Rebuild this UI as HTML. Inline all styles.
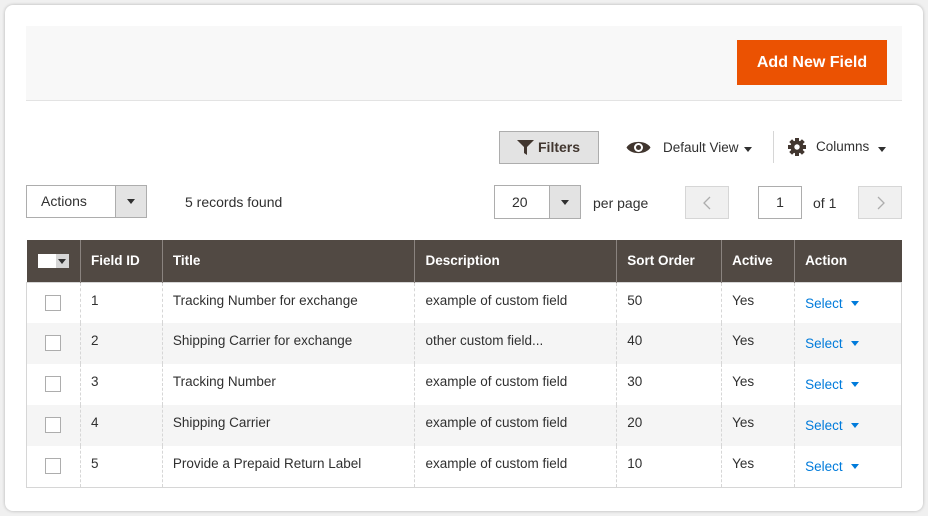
<!DOCTYPE html>
<html><head><style>
*{box-sizing:border-box;margin:0;padding:0}
body{width:928px;height:516px;background:#f0f0f0;font-family:"Liberation Sans",sans-serif;color:#303030;position:relative;overflow:hidden}
.card{position:absolute;left:5px;top:5px;width:918px;height:506px;background:#fff;border-radius:8px;box-shadow:0 0 3px rgba(0,0,0,.25)}
.abs{position:absolute}
.hdr{left:26px;top:26px;width:876px;height:75px;background:#f8f8f8;border-bottom:1px solid #e3e3e3}
.btn{left:737px;top:40px;width:150px;height:45px;background:#eb5202;color:#fff;font-weight:bold;font-size:16px;line-height:45px;text-align:center}
.t{font-size:14px}
table{position:absolute;left:26px;top:240px;width:876px;border-collapse:collapse;font-size:13.5px}
th{background:#514943;color:#fff;text-align:left;font-weight:bold;height:42px;padding-left:10px;border-left:1px solid #8a837f;font-size:13.5px}
th:first-child{border-left:none}
td{height:41px;padding-left:10px;border-left:1px dashed #d6d6d6;vertical-align:top;padding-top:10px}
td:first-child{border-left:none}
tr.g td{background:#f5f5f5}
tbody{border:1px solid #d6d6d6}
tbody tr:last-child td{border-bottom:1px solid #d6d6d6}
.cb{display:inline-block;width:16px;height:16px;border:1px solid #adadad;background:#fff;margin-left:8px;margin-top:2px}
.sel{color:#007bdb;padding-top:13px}
.sel:after{content:"";display:inline-block;border:4px solid transparent;border-top:5px solid #007bdb;border-bottom:0;margin-left:8px;vertical-align:2px}
.caret{display:inline-block;border:4px solid transparent;border-top:5px solid #303030;border-bottom:0}
</style></head><body>
<div class="card"></div>
<div class="abs hdr"></div>
<div class="abs btn">Add New Field</div>

<div class="abs" style="left:499px;top:131px;width:100px;height:33px;background:#e3e3e3;border:1px solid #adadad;font-size:14px;font-weight:bold;color:#41362f;line-height:31px;padding-left:38px">
<svg class="abs" style="left:17px;top:8px" width="17" height="15" viewBox="0 0 17 15"><path d="M0 0H17L10 7V15L7 13V7Z" fill="#41362f"/></svg>Filters</div>
<svg class="abs" style="left:626px;top:140px" width="25" height="15" viewBox="0 0 25 15"><path d="M0.5 7.5C5 0 20 0 24.5 7.5C20 15 5 15 0.5 7.5Z" fill="#41362f"/><circle cx="12.5" cy="7.5" r="4.5" fill="#fff"/><circle cx="12.5" cy="7.5" r="2.5" fill="#41362f"/></svg>
<div class="abs t" style="left:663px;top:140px;font-size:13.5px">Default View</div>
<span class="abs caret" style="left:744px;top:147px"></span>
<div class="abs" style="left:773px;top:131px;width:1px;height:32px;background:#d6d6d6"></div>
<svg class="abs" style="left:788px;top:138px" width="18" height="18" viewBox="0 0 18 18"><g fill="#41362f"><circle cx="9" cy="9" r="6.5"/><rect x="7" y="0" width="4" height="18"/><rect x="0" y="7" width="18" height="4"/><rect x="7" y="0" width="4" height="18" transform="rotate(45 9 9)"/><rect x="7" y="0" width="4" height="18" transform="rotate(-45 9 9)"/></g><circle cx="9" cy="9" r="2.7" fill="#fff"/></svg>
<div class="abs t" style="left:816px;top:139px;font-size:13.5px">Columns</div>
<span class="abs caret" style="left:878px;top:147px"></span>

<div class="abs" style="left:26px;top:185px;width:121px;height:33px;border:1px solid #adadad;font-size:14px;line-height:31px;padding-left:14px">Actions
<div class="abs" style="left:88px;top:-1px;width:32px;height:33px;background:#e3e3e3;border:1px solid #adadad"><span class="abs caret" style="left:11px;top:13px"></span></div></div>
<div class="abs t" style="left:185px;top:194px">5 records found</div>

<div class="abs" style="left:494px;top:185px;width:87px;height:34px;border:1px solid #adadad;font-size:14px;line-height:32px;padding-left:17px">20
<div class="abs" style="left:54px;top:-1px;width:32px;height:34px;background:#e3e3e3;border:1px solid #adadad"><span class="abs caret" style="left:11px;top:14px"></span></div></div>
<div class="abs t" style="left:593px;top:195px">per page</div>
<div class="abs" style="left:685px;top:186px;width:44px;height:33px;background:#f0f0f0;border:1px solid #d6d6d6"><svg class="abs" style="left:17px;top:9px" width="8" height="14" viewBox="0 0 8 14"><path d="M7 1L1 7L7 13" stroke="#adadad" stroke-width="1.3" fill="none"/></svg></div>
<div class="abs" style="left:758px;top:186px;width:44px;height:33px;border:1px solid #adadad;text-align:center;line-height:31px;font-size:14px">1</div>
<div class="abs t" style="left:813px;top:195px">of 1</div>
<div class="abs" style="left:858px;top:186px;width:44px;height:33px;background:#f0f0f0;border:1px solid #d6d6d6"><svg class="abs" style="left:18px;top:9px" width="8" height="14" viewBox="0 0 8 14"><path d="M1 1L7 7L1 13" stroke="#adadad" stroke-width="1.3" fill="none"/></svg></div>

<table>
<colgroup><col style="width:54px"><col style="width:82px"><col style="width:253px"><col style="width:202px"><col style="width:105px"><col style="width:73px"><col style="width:107px"></colgroup>
<thead><tr><th style="padding-left:11px"><span style="display:inline-block;width:31px;height:14px;background:#fff;position:relative;vertical-align:middle"><span style="position:absolute;right:0;top:0;width:13px;height:14px;background:#d6d6d6"><span class="caret" style="position:absolute;left:2px;top:5px"></span></span></span></th><th>Field ID</th><th>Title</th><th>Description</th><th>Sort Order</th><th>Active</th><th>Action</th></tr></thead>
<tbody>
<tr><td><span class="cb"></span></td><td>1</td><td>Tracking Number for exchange</td><td>example of custom field</td><td>50</td><td>Yes</td><td class="sel">Select</td></tr>
<tr class="g"><td><span class="cb"></span></td><td>2</td><td>Shipping Carrier for exchange</td><td>other custom field...</td><td>40</td><td>Yes</td><td class="sel">Select</td></tr>
<tr><td><span class="cb"></span></td><td>3</td><td>Tracking Number</td><td>example of custom field</td><td>30</td><td>Yes</td><td class="sel">Select</td></tr>
<tr class="g"><td><span class="cb"></span></td><td>4</td><td>Shipping Carrier</td><td>example of custom field</td><td>20</td><td>Yes</td><td class="sel">Select</td></tr>
<tr><td><span class="cb"></span></td><td>5</td><td>Provide a Prepaid Return Label</td><td>example of custom field</td><td>10</td><td>Yes</td><td class="sel">Select</td></tr>
</tbody></table>
</body></html>
